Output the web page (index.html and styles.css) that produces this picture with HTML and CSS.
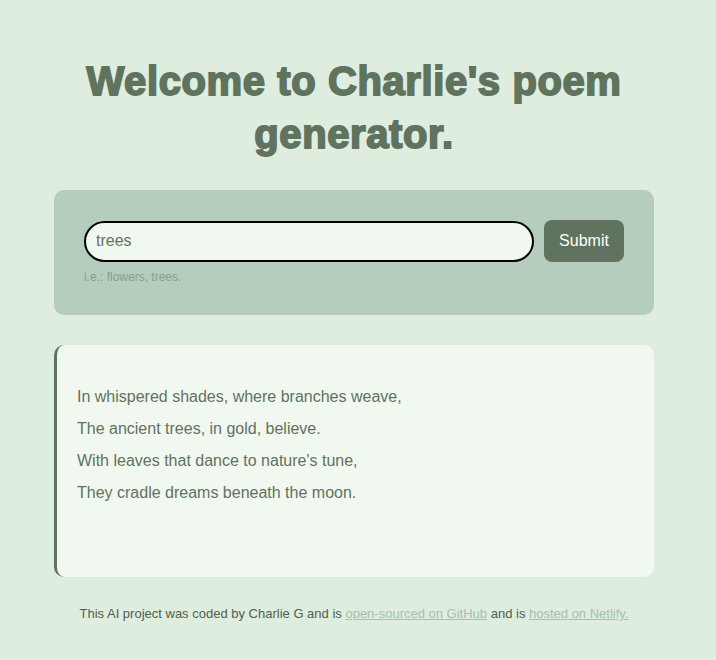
FILE: index.html
```html
<!DOCTYPE html>
<html lang="en">
<head>
<meta charset="utf-8">
<title>Poem generator</title>
<link rel="stylesheet" href="styles.css">
</head>
<body>
<div class="container">
  <h1 class="title">Welcome to Charlie's poem generator.</h1>
  <form class="search-card">
    <div class="search-row">
      <input class="search-input" type="text" value="trees">
      <button class="submit-btn" type="button">Submit</button>
    </div>
    <div class="hint">i.e.: flowers, trees.</div>
  </form>
  <div class="poem-card">
    <p class="poem">In whispered shades, where branches weave,<br>The ancient trees, in gold, believe.<br>With leaves that dance to nature's tune,<br>They cradle dreams beneath the moon.</p>
  </div>
  <footer class="footer">This AI project was coded by Charlie G and is <a href="#">open-sourced on GitHub</a> and is <a href="#">hosted on Netlify.</a></footer>
</div>
</body>
</html>
```
FILE: styles.css
```css
html, body {
  margin: 0;
  padding: 0;
}
body {
  background: #deedde;
  font-family: "Liberation Sans", Arial, sans-serif;
  color: #5f735e;
  padding-right: 8px;
}
.container {
  width: 600px;
  margin: 0 auto;
  padding-top: 55px;
}
.title {
  margin: 0;
  text-align: center;
  font-family: "Liberation Sans", Arial, sans-serif;
  font-weight: 700;
  font-size: 40px;
  line-height: 53px;
  color: #5f735e;
  -webkit-text-stroke: 1.8px #5f735e;
  letter-spacing: 0.6px;
}
.search-card {
  margin: 29px 0 0;
  background: #b5cdbc;
  border-radius: 10px;
  padding: 30px 30px 31px;
}
.search-row {
  display: flex;
  gap: 10px;
  align-items: center;
}
.search-input {
  flex: 1;
  height: 41px;
  box-sizing: border-box;
  border: 2px solid #000;
  border-radius: 21px;
  background: #f1f8ef;
  padding: 0 10px;
  font-family: "Liberation Sans", Arial, sans-serif;
  font-size: 16px;
  color: #5f735e;
  outline: none;
}
.submit-btn {
  width: 80px;
  height: 42px;
  border: none;
  border-radius: 8px;
  background: #5f735e;
  color: #fff;
  font-family: "Liberation Sans", Arial, sans-serif;
  font-size: 16px;
  padding: 0;
}
.hint {
  margin-top: 8px;
  font-size: 12px;
  color: #85a08b;
  line-height: 14px;
}
.poem-card {
  margin-top: 30px;
  background: #f1f8ef;
  border-left: 3px solid #5f735e;
  border-radius: 10px;
  height: 232px;
  box-sizing: border-box;
  padding: 36px 20px 20px;
}
.poem {
  margin: 0;
  font-size: 16px;
  line-height: 32px;
  color: #5f735e;
}
.footer {
  margin-top: 29px;
  text-align: center;
  font-size: 13px;
  color: #4f5f4f;
}
.footer a {
  color: #a3c2ab;
}
```
